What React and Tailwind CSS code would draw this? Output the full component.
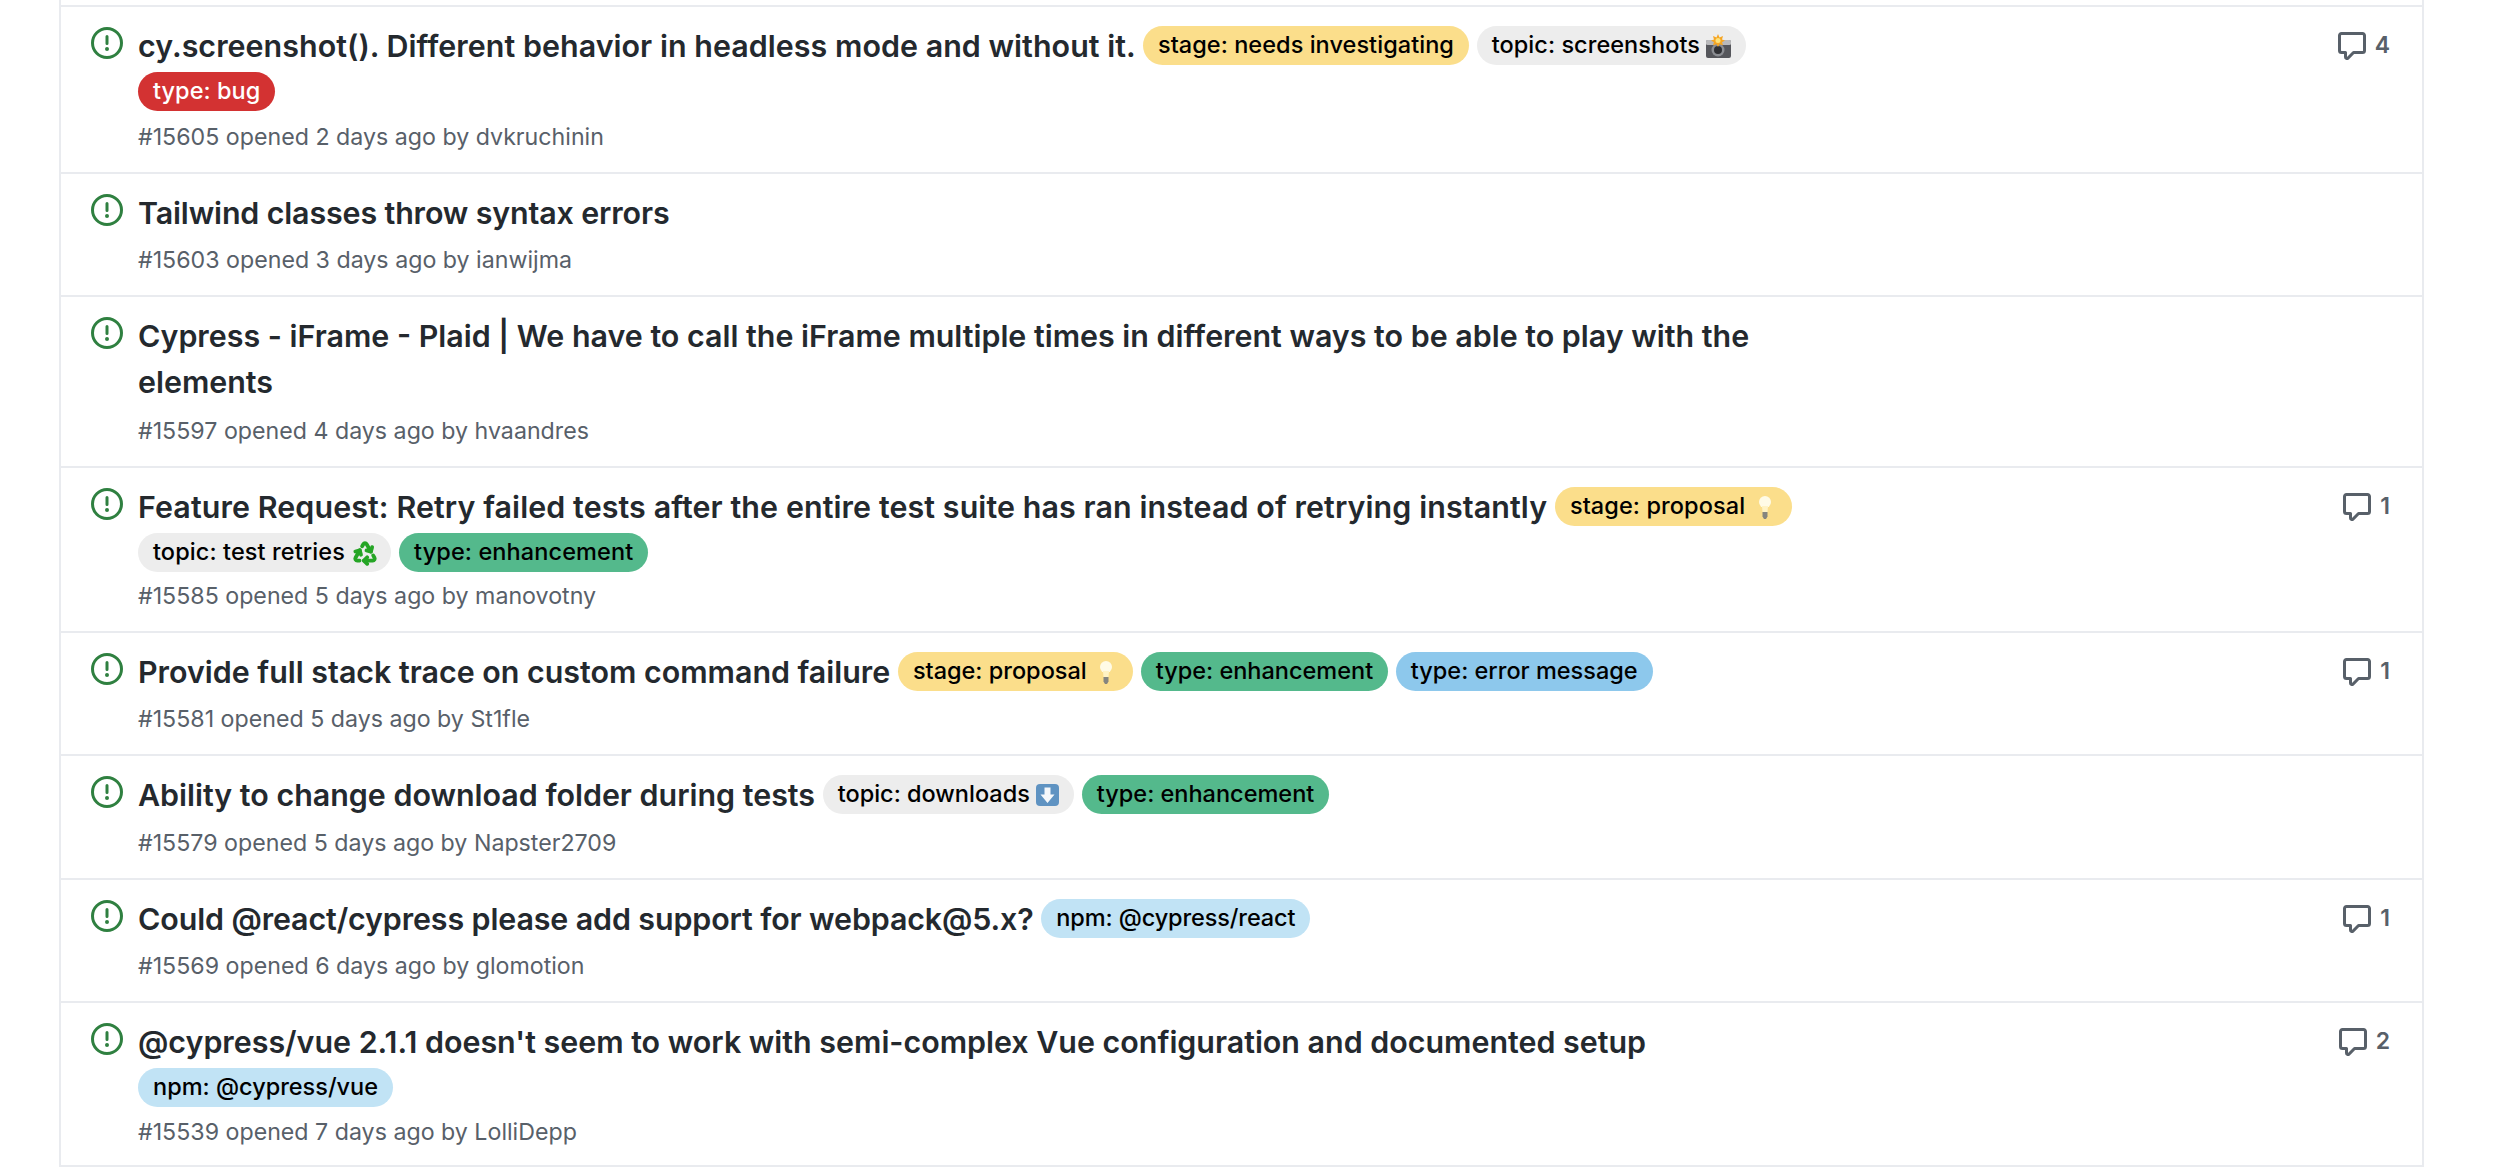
import React from 'react';
import { Recycle as RecycleIcon } from 'lucide-react';

const IssueIcon = () => (
  <svg viewBox="0 0 16 16" className="w-[32px] h-[32px] fill-[#2f8040] shrink-0" aria-hidden="true">
    <path fillRule="evenodd" d="M8 1.5a6.5 6.5 0 100 13 6.5 6.5 0 000-13zM0 8a8 8 0 1116 0A8 8 0 010 8zm9 3a1 1 0 11-2 0 1 1 0 012 0zm-.25-6.25a.75.75 0 00-1.5 0v3.5a.75.75 0 001.5 0v-3.5z" />
  </svg>
);

const CommentIcon = () => (
  <svg viewBox="0 0 16 16" className="w-[32px] h-[32px] fill-[#586069] shrink-0" aria-hidden="true">
    <path fillRule="evenodd" d="M2.75 2.5a.25.25 0 00-.25.25v7.5c0 .138.112.25.25.25h2a.75.75 0 01.75.75v2.19l2.72-2.72a.75.75 0 01.53-.22h4.5a.25.25 0 00.25-.25v-7.5a.25.25 0 00-.25-.25H2.75zM1 2.75C1 1.784 1.784 1 2.75 1h10.5c.966 0 1.75.784 1.75 1.75v7.5A1.75 1.75 0 0113.25 12H9.06l-2.573 2.573A1.457 1.457 0 014 13.543V12H2.75A1.75 1.75 0 011 10.25v-7.5z" />
  </svg>
);

const Camera = () => (
  <svg viewBox="0 0 25 24" className="inline-block w-[25px] h-[24px] align-[-5px]" aria-hidden="true">
    <rect x="0" y="6" width="25" height="18" rx="2" fill="#55565b" />
    <rect x="0" y="6" width="25" height="5" rx="1.500" fill="#b9b9bb" />
    <circle cx="12" cy="16" r="6.500" fill="#8b8d92" />
    <circle cx="12" cy="16" r="4" fill="#2f3034" />
    <path d="M12 0l1.500 3.500L17 2l-1 3.500 3 1-3 1.800 1 3-3.500-1L12 13l-1.500-2.700-3.500 1 1-3-3-1.800 3-1L7 2l3.500 1.500z" fill="#f6a623" />
    <circle cx="12" cy="6.500" r="2.500" fill="#fde27a" />
  </svg>
);

const Bulb = () => (
  <svg viewBox="0 0 12 23" className="inline-block w-[12px] h-[23px] ml-[7px] mr-[6px] align-[-5px]" aria-hidden="true">
    <circle cx="6" cy="6" r="6" fill="#fffbe6" />
    <path d="M3 10h6l-.5 6h-5z" fill="#fff3c4" />
    <path d="M3.500 16h5v4.500L7 23H5l-1.500-2.500z" fill="#85857f" />
  </svg>
);

const Recycle = () => (
  <RecycleIcon size={26} strokeWidth={3.5} className="inline-block text-[#25a525] align-[-6px] ml-[1px] mr-[-2px]" aria-hidden="true" />
);

const DownArrow = () => (
  <svg viewBox="0 0 23 22" className="inline-block w-[23px] h-[22px] align-[-4px]" aria-hidden="true">
    <rect x="0" y="0" width="23" height="22" rx="4" fill="#5f93c2" />
    <path d="M8.500 3.500h6v7h4L11.500 19l-7-8.500h4z" fill="#f5f8fb" />
  </svg>
);

const tones = {
  yellow: 'bg-[#fbde8b]',
  gray: 'bg-[#ededed]',
  green: 'bg-[#54b98c]',
  blue: 'bg-[#8dc8ec]',
  sky: 'bg-[#c1e3f5]',
  red: 'bg-[#d33232] text-white',
};

const Label = ({ tone, children }) => (
  <span className={`inline-block h-[39px] leading-[37px] px-[15px] rounded-full text-[23.5px] font-medium align-[4px] ${tone === 'red' ? '' : 'text-black'} ${tones[tone]}`}>
    {children}
  </span>
);

// small per-row spacing values, the source rows don't land on a regular rhythm
const issues = [
  {
    title: 'cy.screenshot(). Different behavior in headless mode and without it.',
    titleClass: 'tracking-[0.05px]',
    labels: [['yellow', 'stage: needs investigating'], ['gray', 'topic: screenshots ', <Camera key="c" />], ['red', 'type: bug']],
    meta: '#15605 opened 2 days ago by dvkruchinin',
    comments: 4,
    metaClass: 'mt-[7px]',
    rowClass: 'pb-[19px]',
  },
  {
    title: 'Tailwind classes throw syntax errors',
    titleClass: 'tracking-[-0.13px]',
    labels: [],
    meta: '#15603 opened 3 days ago by ianwijma',
    metaClass: 'mt-[9px]',
    rowClass: 'pb-[19px]',
  },
  {
    title: 'Cypress - iFrame - Plaid | We have to call the iFrame multiple times in different ways to be able to play with the elements',
    labels: [],
    meta: '#15597 opened 4 days ago by hvaandres',
    metaClass: 'mt-[11px]',
    rowClass: 'pb-[19px]',
  },
  {
    title: 'Feature Request: Retry failed tests after the entire test suite has ran instead of retrying instantly',
    titleClass: 'tracking-[0.1px]',
    labels: [['yellow', 'stage: proposal ', <Bulb key="b" />], ['gray', 'topic: test retries ', <Recycle key="r" />], ['green', 'type: enhancement']],
    meta: '#15585 opened 5 days ago by manovotny',
    comments: 1,
    metaClass: 'mt-[5px]',
    rowClass: 'pb-[19px]',
  },
  {
    title: 'Provide full stack trace on custom command failure',
    labels: [['yellow', 'stage: proposal ', <Bulb key="b" />], ['green', 'type: enhancement'], ['blue', 'type: error message']],
    meta: '#15581 opened 5 days ago by St1fle',
    comments: 1,
    metaClass: 'mt-[9px]',
    rowClass: 'pb-[19px]',
  },
  {
    title: 'Ability to change download folder during tests',
    labels: [['gray', 'topic: downloads ', <DownArrow key="d" />], ['green', 'type: enhancement']],
    meta: '#15579 opened 5 days ago by Napster2709',
    metaClass: 'mt-[10px]',
    rowClass: 'pb-[19px]',
  },
  {
    title: 'Could @react/cypress please add support for webpack@5.x?',
    titleClass: 'tracking-[-0.11px]',
    labels: [['sky', 'npm: @cypress/react']],
    meta: '#15569 opened 6 days ago by glomotion',
    comments: 1,
    metaClass: 'mt-[9px]',
    rowClass: 'pb-[19px]',
  },
  {
    title: "@cypress/vue 2.1.1 doesn't seem to work with semi-complex Vue configuration and documented setup",
    labels: [['sky', 'npm: @cypress/vue']],
    meta: '#15539 opened 7 days ago by LolliDepp',
    comments: 2,
    metaClass: 'mt-[6px]',
    rowClass: 'pb-[17px]',
  },
];

const IssueRow = ({ issue }) => (
  <div className={`flex border-t-2 border-[#e9ebef] pt-[16px] ${issue.rowClass}`}>
    <div className="pl-[30px] pt-[4px] w-[77px] shrink-0">
      <IssueIcon />
    </div>
    <div className="w-[1660px] shrink-0">
      <div className={`text-[30.4px] leading-[46px] font-semibold text-[#24292e] ${issue.titleClass || ''}`}>
        {issue.title}
        {issue.labels.map(([tone, ...rest], i) => (
          <React.Fragment key={i}>
            {' '}
            <Label tone={tone}>{rest}</Label>
          </React.Fragment>
        ))}
      </div>
      <div className={`${issue.metaClass} text-[23.2px] leading-[31px] text-[#586069]`}>{issue.meta}</div>
    </div>
    {issue.comments && (
      <div className="flex-1 flex justify-end items-start pr-[32px] pt-[7px] gap-[7px]">
        <CommentIcon />
        <span className="text-[23px] leading-[30px] font-semibold text-[#586069]">{issue.comments}</span>
      </div>
    )}
  </div>
);

export default function App() {
  return (
    <div className="h-[1167px] w-[2500px] overflow-hidden bg-white font-['Inter',_'Liberation_Sans',_sans-serif]">
      <div className="ml-[59px] w-[2365px] h-full pt-[5px] border-x-2 border-[#e9ebef]">
        {issues.map((issue) => (
          <IssueRow key={issue.meta} issue={issue} />
        ))}
        <div className="border-t-2 border-[#e9ebef]" />
      </div>
    </div>
  );
}
